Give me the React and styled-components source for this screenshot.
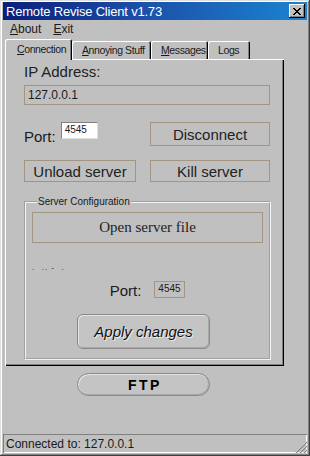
import styled, { createGlobalStyle } from "styled-components";

const Global = createGlobalStyle`
  html, body {
    margin: 0;
    padding: 0;
    background: #c0c0c0;
    overflow: hidden;
  }
  * { box-sizing: border-box; }
`;

const Window = styled.div`
  width: 310px;
  height: 456px;
  display: flex;
  flex-direction: column;
  padding: 2px 3px 3px 3px;
  background: #c0c0c0;
  font-family: "Liberation Sans", Arial, sans-serif;
  color: #1a1a1a;
  box-shadow: inset -1px -1px #404040, inset 1px 1px #dfdfdf,
    inset -2px -2px #808080, inset 2px 2px #fff;
`;

const TitleBar = styled.div`
  height: 18px;
  display: flex;
  align-items: center;
  justify-content: space-between;
  padding: 0 2px 0 3px;
  background: linear-gradient(90deg, #0a1f78 0%, #1c4fa8 45%, #1a84d0 100%);
  color: #fff;
  font-size: 13px;
  letter-spacing: -0.2px;
`;

const CloseBtn = styled.div`
  width: 16px;
  height: 14px;
  background: #c0c0c0;
  display: flex;
  align-items: center;
  justify-content: center;
  box-shadow: inset -1px -1px #000, inset 1px 1px #fff, inset -2px -2px #808080;
`;

const MenuBar = styled.div`
  height: 18px;
  display: flex;
  align-items: center;
  gap: 12px;
  padding-left: 7px;
  font-size: 12px;
`;

const MenuItem = styled.span`
  &::first-letter { text-decoration: underline; }
`;

const TabStrip = styled.div`
  display: flex;
  align-items: flex-end;
  height: 21px;
  margin-left: 2px;
  position: relative;
  z-index: 1;
`;

const Tab = styled.div`
  height: ${(p) => (p.$active ? "21px" : "18px")};
  width: ${(p) => p.$w}px;
  margin-bottom: ${(p) => (p.$active ? "-1px" : "0")};
  padding-left: ${(p) => (p.$active ? "12px" : "10px")};
  padding-top: ${(p) => (p.$active ? "4px" : "3px")};
  font-size: 10.5px;
  letter-spacing: -0.4px;
  white-space: nowrap;
  overflow: hidden;
  background: #c0c0c0;
  border-radius: 2px 2px 0 0;
  box-shadow: inset 1px 1px #fff, inset -1px 0 #000, inset -2px 0 #808080;
  & u { text-decoration: underline; }
`;

const Body = styled.div`
  display: flex;
  padding-left: 2px;
`;

const Panel = styled.div`
  width: 279px;
  height: 307px;
  display: flex;
  flex-direction: column;
  padding: 4px 14px 0 19px;
  background: #c0c0c0;
  box-shadow: inset 1px 1px #fff, inset -1px -1px #000, inset -2px -2px #808080;
`;

const BigLabel = styled.div`
  font-size: 15px;
  line-height: 17px;
  color: #222;
`;

const Field = styled.div`
  margin-top: 5px;
  height: 20px;
  border: 1px solid #a39483;
  padding-left: 3px;
  font-size: 12px;
  line-height: 18px;
`;

const Row = styled.div`
  display: flex;
  justify-content: space-between;
  margin-top: ${(p) => p.$mt}px;
  height: ${(p) => p.$h}px;
`;

const PortGroup = styled.div`
  display: flex;
  align-items: flex-start;
  gap: 5px;
`;

const PortLabel = styled.span`
  font-size: 15px;
  line-height: 17px;
  margin-top: ${(p) => p.$mt || 0}px;
`;

const PortInput = styled.div`
  width: ${(p) => p.$w}px;
  height: ${(p) => p.$h}px;
  background: ${(p) => (p.$white ? "#fff" : "transparent")};
  border: 1px solid ${(p) => (p.$white ? "#808080" : "#a39483")};
  border-right-color: ${(p) => (p.$white ? "#dfdfdf" : "#a39483")};
  border-bottom-color: ${(p) => (p.$white ? "#dfdfdf" : "#a39483")};
  font-size: 10px;
  line-height: 14px;
  padding-left: 3px;
`;

const Button = styled.div`
  width: ${(p) => p.$w}px;
  border: 1px solid #a39483;
  display: flex;
  align-items: center;
  justify-content: center;
  font-size: 15px;
  color: #222;
  font-family: ${(p) => (p.$serif ? '"Liberation Serif", serif' : "inherit")};
`;

const Group = styled.fieldset`
  margin: 14px 0 0 0;
  padding: 4px 6px 0 6px;
  width: 246px;
  height: 164px;
  border: 2px groove #f4f4f4;
  display: flex;
  flex-direction: column;
`;

const Legend = styled.legend`
  font-size: 10px;
  padding: 0 1px;
  margin-left: 5px;
`;

const OpenButton = styled(Button)`
  width: 231px;
  height: 31px;
  margin-top: 1px;
`;

const Dots = styled.div`
  margin-top: 21px;
  height: 8px;
  font-size: 8px;
  line-height: 8px;
  letter-spacing: 1px;
  white-space: pre;
  color: #222;
`;

const CenterRow = styled.div`
  display: flex;
  justify-content: center;
  align-items: flex-start;
  gap: 13px;
  margin-top: 9px;
`;

const Apply = styled.div`
  margin: 15px 0 0 45px;
  width: 133px;
  height: 35px;
  border-radius: 6px;
  border: 1px solid #8a8a8a;
  box-shadow: inset 1px 1px #e4e4e4, inset -1px -1px #a8a8a8;
  background-color: #c4c4c4;
  background-image: radial-gradient(#b2b2b2 0.6px, transparent 0.7px);
  background-size: 2px 2px;
  display: flex;
  align-items: center;
  justify-content: center;
  font-size: 15px;
  font-style: italic;
  color: #111;
  text-shadow: 1px 1px 0 #eee;
`;

const FtpWrap = styled.div`
  width: 279px;
  margin: 7px 0 0 2px;
  display: flex;
  justify-content: center;
`;

const Ftp = styled(Apply)`
  margin: 0 2px 0 0;
  height: 23px;
  border-radius: 12px;
  font-style: normal;
  font-weight: bold;
  font-size: 14px;
  letter-spacing: 2.5px;
  padding-left: 3px;
  color: #000;
  text-shadow: none;
`;

const Spacer = styled.div`
  flex: 1;
`;

const StatusBar = styled.div`
  height: 19px;
  display: flex;
  align-items: center;
  justify-content: space-between;
  padding-left: 3px;
  font-size: 12px;
  box-shadow: inset 1px 1px #808080, inset -1px -1px #fff;
`;

const Grip = () => (
  <svg width="12" height="12" viewBox="0 0 12 12" style={{ alignSelf: "flex-end" }}>
    {[0, 4, 8].map((o) => (
      <g key={o}>
        <line x1={12} y1={o} x2={o} y2={12} stroke="#fff" strokeWidth="1" />
        <line x1={12} y1={o + 1} x2={o + 1} y2={12} stroke="#808080" strokeWidth="1.2" />
      </g>
    ))}
  </svg>
);

export default function App() {
  return (
    <>
      <Global />
      <Window>
        <TitleBar>
          <span>Remote Revise Client v1.73</span>
          <CloseBtn>
            <svg width="8" height="7" viewBox="0 0 8 7">
              <path d="M0 0 L7 7 M1 0 L8 7 M7 0 L0 7 M8 0 L1 7" stroke="#000" strokeWidth="1" />
            </svg>
          </CloseBtn>
        </TitleBar>
        <MenuBar>
          <MenuItem>About</MenuItem>
          <MenuItem>Exit</MenuItem>
        </MenuBar>
        <TabStrip>
          <Tab $active $w={67}><u>C</u>onnection</Tab>
          <Tab $w={79}><u>A</u>nnoying Stuff</Tab>
          <Tab $w={57}><u>M</u>essages</Tab>
          <Tab $w={42}>Logs</Tab>
        </TabStrip>
        <Body>
          <Panel>
            <BigLabel>IP Address:</BigLabel>
            <Field>127.0.0.1</Field>
            <Row $mt={17} $h={24}>
              <PortGroup>
                <PortLabel $mt={6}>Port:</PortLabel>
                <PortInput $white $w={37} $h={17}>4545</PortInput>
              </PortGroup>
              <Button $w={120}>Disconnect</Button>
            </Row>
            <Row $mt={14} $h={22}>
              <Button $w={112}>Unload server</Button>
              <Button $w={120}>Kill server</Button>
            </Row>
            <Group>
              <Legend>Server Configuration</Legend>
              <OpenButton $serif>Open server file</OpenButton>
              <Dots>{".  .. -  ."}</Dots>
              <CenterRow>
                <PortLabel $mt={1}>Port:</PortLabel>
                <PortInput $w={31} $h={17}>4545</PortInput>
              </CenterRow>
              <Apply>Apply changes</Apply>
            </Group>
          </Panel>
        </Body>
        <FtpWrap>
          <Ftp>FTP</Ftp>
        </FtpWrap>
        <Spacer />
        <StatusBar>
          <span>Connected to: 127.0.0.1</span>
          <Grip />
        </StatusBar>
      </Window>
    </>
  );
}
